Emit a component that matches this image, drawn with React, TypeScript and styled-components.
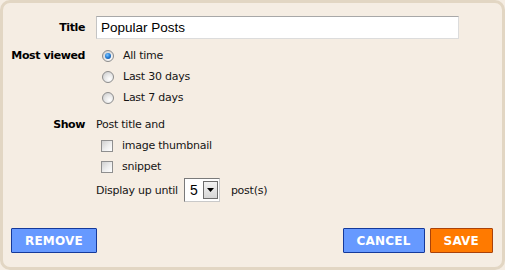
import React, { useState } from "react";
import styled, { createGlobalStyle } from "styled-components";

const GlobalStyle = createGlobalStyle`
html, body {
margin: 0;
padding: 0;
background: #f5ede3;
}
`;

const Panel = styled.div`
display: flex;
flex-direction: column;
box-sizing: border-box;
width: 505px;
height: 270px;
padding: 13px 9px 14px 0;

background-color: #f5ede3;
border: 3px solid #e2d6c3;
border-radius: 10px;

font-family: "DejaVu Sans", Tahoma, sans-serif;
font-size: 11px;
letter-spacing: -0.25px;
color: #151515;
`;

const Form = styled.div`
display: grid;
grid-template-columns: 82px 1fr;
column-gap: 11px;
row-gap: 6px;
`;

const Label = styled.div<{ $height?: number }>`
line-height: ${(p) => p.$height ?? 21}px;
text-align: right;
font-weight: bold;
letter-spacing: -0.4px;
color: #000;
`;

const TitleInput = styled.input`
box-sizing: border-box;
width: 363px;
height: 23px;
padding: 0 4px;

background: #fff;
border: 1px solid #dcdcdc;
border-top-color: #a8a8a8;
border-left-color: #c4c4c4;

font-family: "Liberation Sans", Arial, sans-serif;
font-size: 13.5px;
letter-spacing: 0;
color: #000;
outline: none;
`;

const Column = styled.div`
display: flex;
flex-direction: column;
`;

const Option = styled.label<{ $indent?: number }>`
display: flex;
align-items: center;
height: 21px;
padding-left: ${(p) => p.$indent ?? 0}px;
gap: 9px;
cursor: pointer;
`;

const Line = styled.div`
display: flex;
align-items: center;
height: 21px;
`;

const Radio = styled.span<{ $checked: boolean }>`
box-sizing: border-box;
display: inline-flex;
align-items: center;
justify-content: center;
width: 12px;
height: 12px;

border: 1px solid #8c8c8c;
border-radius: 50%;
background: radial-gradient(circle at 65% 70%, #ffffff 0%, #e8e8e8 45%, #c6c6c6 100%);

&::after {
    content: "";
    display: ${(p) => (p.$checked ? "block" : "none")};
    width: 6px;
    height: 6px;
    border-radius: 50%;
    background: radial-gradient(circle at 40% 35%, #7fc6ff 0%, #2a82d8 45%, #0b3f86 100%);
}
`;

const Check = styled.span<{ $checked: boolean }>`
box-sizing: border-box;
display: inline-flex;
align-items: center;
justify-content: center;
width: 12px;
height: 12px;

border: 1px solid #8f8f8f;
background: linear-gradient(135deg, #cfcfcf 0%, #eeeeee 55%, #ffffff 100%);

font-size: 10px;
line-height: 1;
color: #222;
`;

const DisplayRow = styled.div`
display: flex;
align-items: center;
height: 24px;
margin-top: 1px;
`;

const SelectBox = styled.div`
box-sizing: border-box;
display: flex;
align-items: center;
justify-content: space-between;
width: 36px;
height: 24px;
margin: 0 11px 0 6px;
padding: 0 1px 0 5px;

background: #fff;
border: 1px solid #7a7a7a;
border-right-color: #c9c9c9;
border-bottom-color: #c9c9c9;

font-family: "Liberation Sans", Arial, sans-serif;
font-size: 14px;
letter-spacing: 0;
color: #000;
`;

const DropButton = styled.span`
box-sizing: border-box;
display: flex;
align-items: center;
justify-content: center;
width: 15px;
height: 18px;

background: linear-gradient(#f2f2f2, #d6d6d6);
border: 1px solid #6d6d6d;
`;

const Footer = styled.div`
display: flex;
align-items: center;
gap: 5px;
margin-top: auto;
padding-left: 8px;
`;

const Spacer = styled.div`
flex: 1;
`;

const Button = styled.button<{ $variant?: "blue" | "orange" }>`
box-sizing: border-box;
height: 25px;
padding: 0 13px;

background-color: ${(p) => (p.$variant === "orange" ? "#ff7a00" : "#6699ff")};
border: 1px solid ${(p) => (p.$variant === "orange" ? "#a9420a" : "#15399a")};
border-radius: 1px;

font-family: "DejaVu Sans", Tahoma, sans-serif;
font-size: 12px;
font-weight: bold;
letter-spacing: 0.2px;
color: #fff;
cursor: pointer;
`;

const ranges = ["All time", "Last 30 days", "Last 7 days"];

export default function App() {
    const [range, setRange] = useState(0);
    const [thumb, setThumb] = useState(false);
    const [snippet, setSnippet] = useState(false);

    return (
        <>
            <GlobalStyle />
            <Panel>
                <Form>
                    <Label $height={23}>Title</Label>
                    <TitleInput defaultValue="Popular Posts" />

                    <Label>Most viewed</Label>
                    <Column>
                        {ranges.map((r, i) => (
                            <Option key={r} $indent={6} onClick={() => setRange(i)}>
                                <Radio $checked={range === i} />
                                {r}
                            </Option>
                        ))}
                    </Column>

                    <Label>Show</Label>
                    <Column>
                        <Line>Post title and</Line>
                        <Option $indent={5} onClick={() => setThumb(!thumb)}>
                            <Check $checked={thumb}>{thumb ? "✓" : ""}</Check>
                            image thumbnail
                        </Option>
                        <Option $indent={5} onClick={() => setSnippet(!snippet)}>
                            <Check $checked={snippet}>{snippet ? "✓" : ""}</Check>
                            snippet
                        </Option>
                        <DisplayRow>
                            Display up until
                            <SelectBox>
                                5
                                <DropButton>
                                    <svg width="7" height="4" viewBox="0 0 7 4">
                                        <path d="M0 0h7L3.5 4z" fill="#000" />
                                    </svg>
                                </DropButton>
                            </SelectBox>
                            post(s)
                        </DisplayRow>
                    </Column>
                </Form>

                <Footer>
                    <Button>REMOVE</Button>
                    <Spacer />
                    <Button>CANCEL</Button>
                    <Button $variant="orange">SAVE</Button>
                </Footer>
            </Panel>
        </>
    );
}
